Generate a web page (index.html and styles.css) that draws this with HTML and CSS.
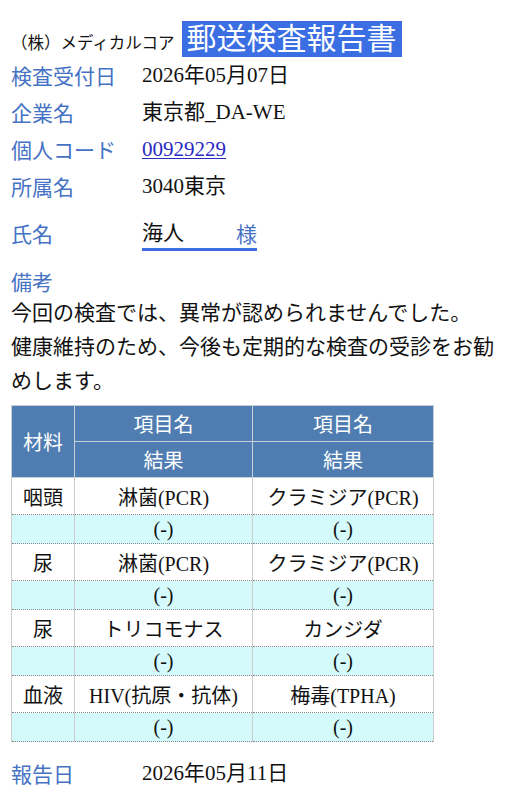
FILE: index.html
```html
<!DOCTYPE html>
<html lang="ja">
<head>
<meta charset="utf-8">
<title>郵送検査報告書</title>
<link rel="stylesheet" href="styles.css">
</head>
<body>
<div class="page">
  <div class="header">
    <span class="company">（株）メディカルコア</span>
    <span class="title">郵送検査報告書</span>
  </div>

  <div class="info">
    <div class="row"><span class="label">検査受付日</span><span class="value">2026年05月07日</span></div>
    <div class="row"><span class="label">企業名</span><span class="value">東京都_DA-WE</span></div>
    <div class="row"><span class="label">個人コード</span><span class="value"><a class="code" href="#">00929229</a></span></div>
    <div class="row"><span class="label">所属名</span><span class="value">3040東京</span></div>
    <div class="row name-row"><span class="label">氏名</span><span class="name"><span>海人</span><span class="sama">様</span></span></div>
  </div>

  <div class="remarks-label">備考</div>
  <p class="remarks">今回の検査では、異常が認められませんでした。<br>健康維持のため、今後も定期的な検査の受診をお勧めします。</p>

  <table class="results">
    <colgroup>
      <col class="c-mat">
      <col class="c-item">
      <col class="c-item2">
    </colgroup>
    <thead>
      <tr class="h-row"><th rowspan="2">材料</th><th>項目名</th><th>項目名</th></tr>
      <tr class="h-row"><th>結果</th><th>結果</th></tr>
    </thead>
    <tbody>
      <tr class="item"><td>咽頭</td><td>淋菌(PCR)</td><td>クラミジア(PCR)</td></tr>
      <tr class="res"><td></td><td>(-)</td><td>(-)</td></tr>
      <tr class="item"><td>尿</td><td>淋菌(PCR)</td><td>クラミジア(PCR)</td></tr>
      <tr class="res"><td></td><td>(-)</td><td>(-)</td></tr>
      <tr class="item"><td>尿</td><td>トリコモナス</td><td>カンジダ</td></tr>
      <tr class="res"><td></td><td>(-)</td><td>(-)</td></tr>
      <tr class="item"><td>血液</td><td>HIV(抗原・抗体)</td><td>梅毒(TPHA)</td></tr>
      <tr class="res"><td></td><td>(-)</td><td>(-)</td></tr>
    </tbody>
  </table>

  <div class="row report"><span class="label">報告日</span><span class="value">2026年05月11日</span></div>
</div>
</body>
</html>
```

FILE: styles.css
```css
html, body {
  margin: 0;
  padding: 0;
  background: #ffffff;
}

.page {
  padding: 21px 11px 0 11px;
  font-family: "Liberation Serif", "Noto Sans CJK JP", serif;
  color: #111111;
}

.header {
  display: flex;
  align-items: baseline;
  gap: 7px;
}

.company {
  font-family: "Liberation Serif", "Noto Sans CJK JP", serif;
  font-size: 16.5px;
  color: #111;
}

.title {
  background: #3a6ee2;
  color: #ffffff;
  font-family: "Liberation Serif", "Noto Sans CJK JP", serif;
  font-size: 30px;
  line-height: 36px;
  padding: 0 5px;
}

.info {
  margin-top: 1px;
  display: flex;
  flex-direction: column;
  gap: 3px;
}

.row {
  display: flex;
  align-items: center;
  line-height: 34px;
}

.label {
  width: 131px;
  flex: none;
  font-family: "Noto Sans CJK JP", sans-serif;
  font-size: 21px;
  color: #4672c4;
}

.value {
  font-size: 21px;
}

.code {
  color: #2a2ac4;
  text-decoration: underline;
  text-decoration-thickness: 1px;
  text-underline-offset: 2px;
}

.name-row {
  margin-top: 12px;
  line-height: 30px;
  align-items: flex-start;
}

.name {
  display: flex;
  justify-content: space-between;
  width: 115px;
  font-size: 21px;
  border-bottom: 3px solid #3a6ee2;
}

.sama {
  font-family: "Noto Sans CJK JP", sans-serif;
  color: #4672c4;
}

.remarks-label {
  margin-top: 15px;
  font-family: "Noto Sans CJK JP", sans-serif;
  font-size: 21px;
  line-height: 30px;
  color: #4672c4;
}

.remarks {
  margin: 0;
  font-size: 21px;
  line-height: 34px;
}

.results {
  margin-top: 7px;
  border-collapse: collapse;
  table-layout: fixed;
  width: 422px;
  font-size: 20px;
  text-align: center;
}

.c-mat { width: 63px; }
.c-item { width: 178px; }
.c-item2 { width: 181px; }

.results th {
  background: #4f7db2;
  color: #ffffff;
  font-weight: normal;
  border: 1px solid #c9cfd6;
  height: 35px;
  padding: 0;
}

.results td {
  border-left: 1px solid #cccccc;
  border-right: 1px solid #cccccc;
  border-bottom: 1px dotted #8a8a8a;
  padding: 0;
}

.item td {
  background: #ffffff;
  height: 36px;
}

.res td {
  background: #d4fafc;
  height: 28px;
}

.report {
  margin-top: 14px;
}
```
